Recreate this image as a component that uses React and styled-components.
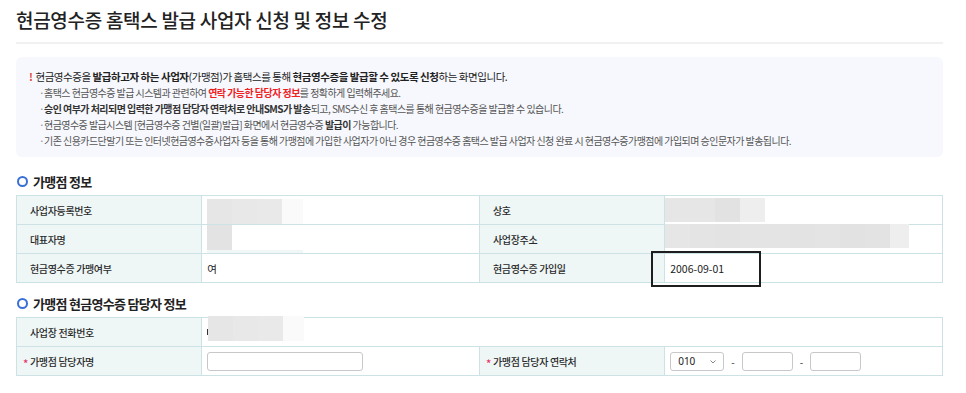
import React from 'react';
import styled, { createGlobalStyle } from 'styled-components';

const Global = createGlobalStyle`
  html, body { margin: 0; padding: 0; background: #fff; }
  body { font-family: "Noto Sans CJK KR", "Noto Sans", sans-serif; color: #222; }
  * { box-sizing: border-box; }
`;

const Page = styled.div`
  padding: 6px 23px 0 16px;
`;

const Title = styled.h1`
  margin: 0;
  font-size: 19px;
  line-height: 27px;
  font-weight: 500;
  letter-spacing: -0.3px;
  color: #222;
`;

const Divider = styled.div`
  margin-top: 9px;
  height: 2px;
  background: #f1f1f3;
`;

const InfoBox = styled.div`
  margin-top: 13px;
  background: #f7f8fd;
  border-radius: 6px;
  padding: 12px 14px 8px 13px;
  font-size: 10px;
  line-height: 16px;
  letter-spacing: -0.55px;
`;

const Notice = styled.p`
  margin: 0;
  color: #222;
  font-size: 10.5px;
  letter-spacing: -0.45px;
  b { font-weight: 700; }
`;

const Bang = styled.span`
  color: #e2452f;
  font-weight: 700;
  margin-right: 3px;
`;

const BulletList = styled.ul`
  margin: 0;
  padding: 0 0 0 10px;
  list-style: none;
  color: #555;
`;

const Bullet = styled.li`
  display: flex;
  &::before {
    content: "·";
    width: 5px;
    color: #888;
    flex: none;
  }
  b { font-weight: 700; color: #333; }
`;

const Red = styled.b`
  color: #f0201f !important;
  font-weight: 700;
`;

const Heading = styled.h2`
  margin: ${(p) => p.$top}px 0 4px;
  display: flex;
  align-items: center;
  height: 20px;
  font-size: 13px;
  font-weight: 700;
  letter-spacing: -0.7px;
  color: #222;
  &::before {
    content: "";
    width: 7px;
    height: 7px;
    border: 2px solid #3a6fd6;
    border-radius: 50%;
    margin: 0 5px 0 1px;
  }
`;

const Table = styled.table`
  width: 100%;
  border-collapse: collapse;
  table-layout: fixed;
  border: 1px solid #cde2e5;
`;

const Th = styled.th`
  position: relative;
  height: 29px;
  background: #eef6f6;
  border: 1px solid #cde2e5;
  text-align: left;
  vertical-align: middle;
  font-weight: 500;
  font-size: 10px;
  letter-spacing: -0.35px;
  color: #2a2a2a;
  padding: 0 0 0 ${(p) => (p.$required ? 6 : 13)}px;
`;

const Req = styled.span`
  display: inline-block;
  width: 7px;
  color: #e8336a;
  font-size: 11px;
  position: relative;
  top: 2px;
`;

const Td = styled.td`
  position: relative;
  height: 29px;
  border: 1px solid #cde2e5;
  vertical-align: middle;
  font-size: 10.5px;
  color: #222;
  padding: 0 5px;
`;

const Redact = styled.div`
  position: absolute;
  left: ${(p) => p.$left}px;
  top: ${(p) => p.$top}px;
  display: flex;
`;

const Block = styled.div`
  width: ${(p) => p.$w}px;
  height: ${(p) => p.$h || 25}px;
  background: ${(p) => p.$c};
`;

const Mark = styled.div`
  position: absolute;
  left: ${(p) => p.$left}px;
  top: ${(p) => p.$top}px;
  width: ${(p) => p.$w || 1}px;
  height: ${(p) => p.$h || 2}px;
  background: ${(p) => p.$c};
`;

const Annotation = styled.div`
  position: absolute;
  left: -14px;
  top: -3px;
  width: 110px;
  height: 36px;
  border: 2px solid #1e1e1e;
  pointer-events: none;
`;

const FieldRow = styled.div`
  display: flex;
  align-items: center;
  gap: 7px;
`;

const TextInput = styled.input`
  width: ${(p) => p.$w}px;
  height: 19px;
  border: 1px solid #c8c8c8;
  border-radius: 3px;
  background: #fff;
  padding: 0 6px;
  font: inherit;
  outline: none;
`;

const SelectWrap = styled.div`
  position: relative;
  width: 54px;
  height: 19px;
`;

const Select = styled.select`
  appearance: none;
  width: 100%;
  height: 100%;
  border: 1px solid #c8c8c8;
  border-radius: 3px;
  background: #fff;
  padding: 0 0 0 7px;
  font-family: "Noto Sans", sans-serif;
  font-size: 10px;
  color: #222;
  outline: none;
`;

const Chevron = styled.svg`
  position: absolute;
  right: 8px;
  top: 8px;
  pointer-events: none;
`;

const Dash = styled.span`
  font-size: 10px;
  color: #333;
`;

const gray3 = ['#e6e6e6', '#e8e8e8', '#e9e9e9'];
const addr = ['#e6e6e6', '#e4e4e4', '#e3e3e3', '#e4e4e4', '#e4e4e4', '#e3e3e3', '#e4e4e4', '#e2e2e2', '#e3e3e3'];

function Blocks({ colors, w = 25, h = 25 }) {
  return colors.map((c, i) => <Block key={i} $w={w} $h={h} $c={c} />);
}

export default function App() {
  return (
    <>
      <Global />
      <Page>
        <Title>현금영수증 홈택스 발급 사업자 신청 및 정보 수정</Title>
        <Divider />
        <InfoBox>
          <Notice>
            <Bang>!</Bang>현금영수증을 <b>발급하고자 하는 사업자</b>(가맹점)가 홈택스를 통해{' '}
            <b>현금영수증을 발급할 수 있도록 신청</b>하는 화면입니다.
          </Notice>
          <BulletList>
            <Bullet>
              <span>
                홈택스 현금영수증 발급 시스템과 관련하여 <Red>연락 가능한 담당자 정보</Red>를 정확하게 입력해주세요.
              </span>
            </Bullet>
            <Bullet>
              <span>
                <b>승인 여부가 처리되면 입력한 가맹점 담당자 연락처로 안내SMS가 발송</b>되고, SMS수신 후 홈택스를 통해 현금영수증을 발급할 수 있습니다.
              </span>
            </Bullet>
            <Bullet>
              <span>
                현금영수증 발급시스템 [현금영수증 건별(일괄)발급] 화면에서 현금영수증 <b>발급이</b> 가능합니다.
              </span>
            </Bullet>
            <Bullet>
              <span>
                기존 신용카드단말기 또는 인터넷현금영수증사업자 등을 통해 가맹점에 가입한 사업자가 아닌 경우 현금영수증 홈택스 발급 사업자 신청 완료 시 현금영수증가맹점에 가입되며 승인문자가 발송됩니다.
              </span>
            </Bullet>
          </BulletList>
        </InfoBox>

        <Heading $top={14}>가맹점 정보</Heading>
        <Table>
          <colgroup>
            <col style={{ width: '20%' }} />
            <col style={{ width: '30%' }} />
            <col style={{ width: '20%' }} />
            <col style={{ width: '30%' }} />
          </colgroup>
          <tbody>
            <tr>
              <Th>사업자등록번호</Th>
              <Td>
                <Mark $left={5} $top={13} $c="#f3a531" />
                <Redact $left={5} $top={3}>
                  <Blocks colors={gray3} />
                  <Block $w={21} $c="#fafafa" />
                </Redact>
              </Td>
              <Th>상호</Th>
              <Td>
                <Redact $left={0} $top={2}>
                  <Blocks colors={['#e6e6e6', '#e6e6e6', '#e2e2e2', '#eeeeee']} w={25} h={24} />
                </Redact>
              </Td>
            </tr>
            <tr>
              <Th>대표자명</Th>
              <Td>
                <Mark $left={5} $top={13} $c="#f3a531" />
                <Redact $left={5} $top={0}>
                  <Block $w={25} $c="#e3e3e3" />
                </Redact>
                <Redact $left={5} $top={25}>
                  <Block $w={96} $h={3} $c="#f1f7f7" />
                </Redact>
              </Td>
              <Th>사업장주소</Th>
              <Td>
                <Redact $left={0} $top={-1}>
                  <Blocks colors={addr} w={25} h={24} />
                  <Block $w={19} $h={24} $c="#eeeeee" />
                </Redact>
              </Td>
            </tr>
            <tr>
              <Th>현금영수증 가맹여부</Th>
              <Td>여</Td>
              <Th>현금영수증 가입일</Th>
              <Td>
                2006-09-01
                <Annotation />
              </Td>
            </tr>
          </tbody>
        </Table>

        <Heading $top={10}>가맹점 현금영수증 담당자 정보</Heading>
        <Table>
          <colgroup>
            <col style={{ width: '20%' }} />
            <col style={{ width: '30%' }} />
            <col style={{ width: '20%' }} />
            <col style={{ width: '30%' }} />
          </colgroup>
          <tbody>
            <tr>
              <Th>사업장 전화번호</Th>
              <Td colSpan={3}>
                <Mark $left={5} $top={11} $w={2} $h={6} $c="#333" />
                <Redact $left={6} $top={-2}>
                  <Blocks colors={gray3} />
                  <Block $w={21} $c="#fafafa" />
                </Redact>
              </Td>
            </tr>
            <tr>
              <Th $required>
                <Req>*</Req>가맹점 담당자명
              </Th>
              <Td>
                <TextInput $w={156} />
              </Td>
              <Th $required>
                <Req>*</Req>가맹점 담당자 연락처
              </Th>
              <Td>
                <FieldRow>
                  <SelectWrap>
                    <Select defaultValue="010">
                      <option>010</option>
                      <option>011</option>
                      <option>016</option>
                      <option>017</option>
                    </Select>
                    <Chevron width="6" height="4" viewBox="0 0 6 4">
                      <path d="M0.5 0.5 L3 3 L5.5 0.5" fill="none" stroke="#888" strokeWidth="1" />
                    </Chevron>
                  </SelectWrap>
                  <Dash>-</Dash>
                  <TextInput $w={51} />
                  <Dash>-</Dash>
                  <TextInput $w={51} />
                </FieldRow>
              </Td>
            </tr>
          </tbody>
        </Table>
      </Page>
    </>
  );
}
